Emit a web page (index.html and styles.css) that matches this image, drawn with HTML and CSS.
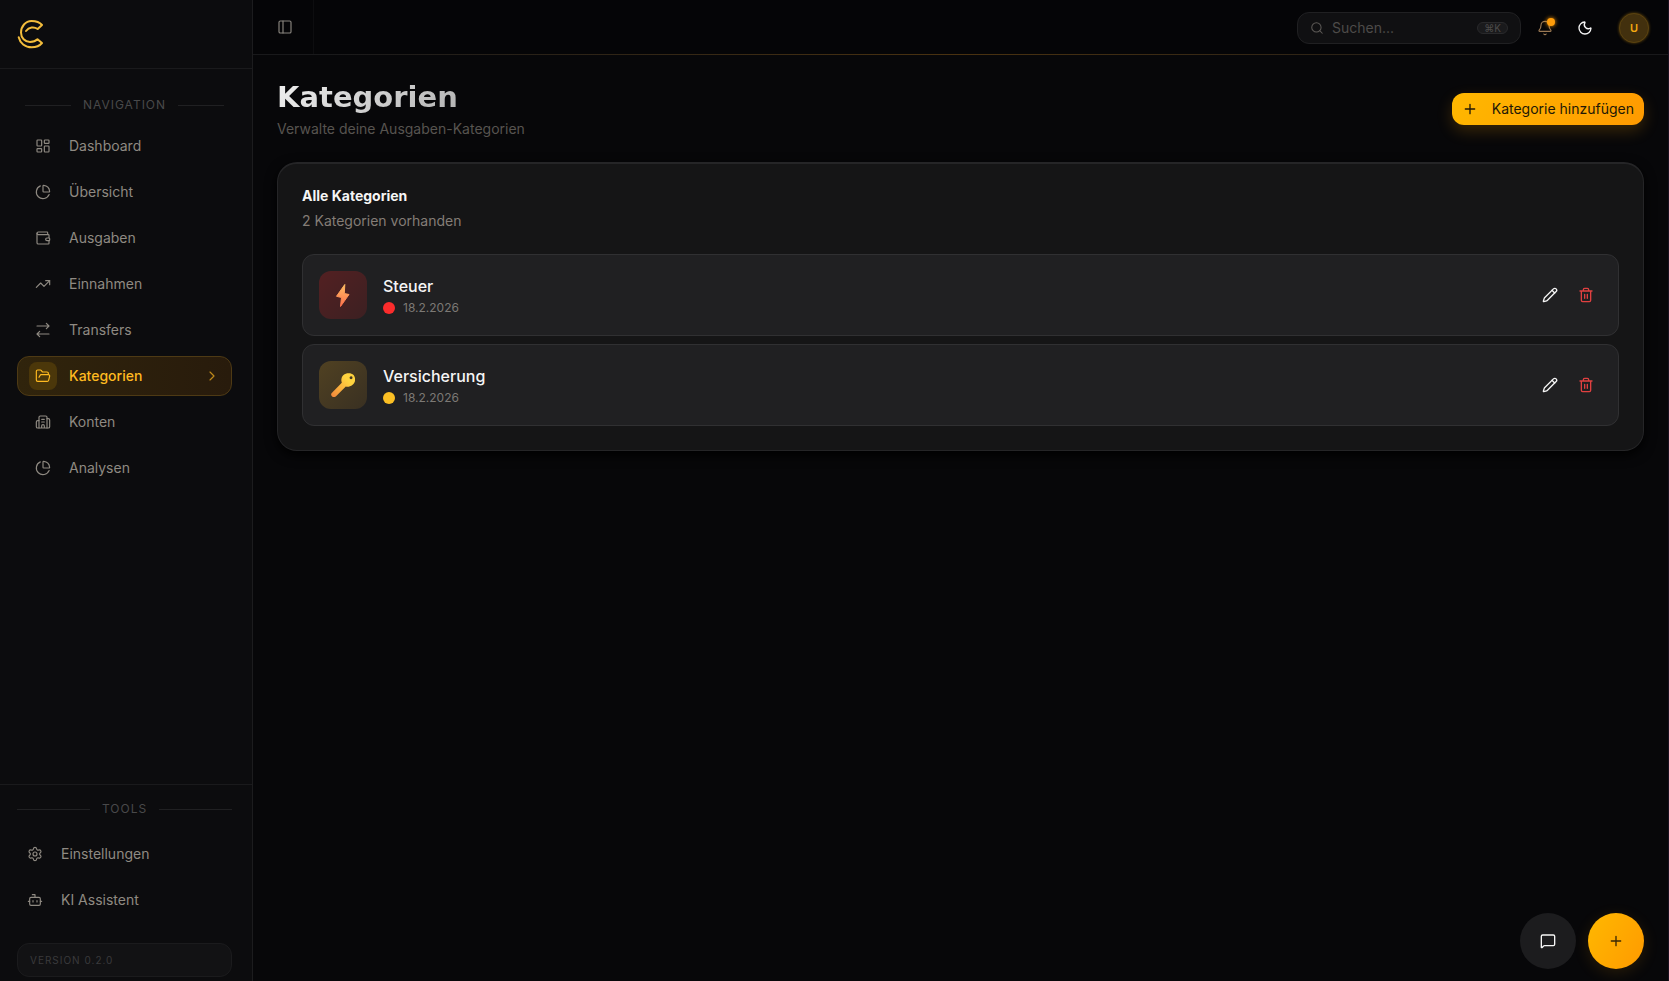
FILE: index.html
```html
<!DOCTYPE html>
<html lang="de">
<head>
<meta charset="utf-8">
<meta name="viewport" content="width=device-width, initial-scale=1">
<title>Kategorien</title>
<link rel="stylesheet" href="styles.css">
</head>
<body>
<svg class="sprite" aria-hidden="true">
  <symbol id="pie" viewBox="0 0 24 24"><path d="M21 12c.552 0 1.005-.449.95-.998a10 10 0 0 0-8.953-8.951c-.55-.055-.998.398-.998.95v8a1 1 0 0 0 1 1z"/><path d="M21.21 15.89A10 10 0 1 1 8 2.83"/></symbol>
  <symbol id="plus" viewBox="0 0 24 24"><path d="M5 12h14M12 5v14"/></symbol>
  <symbol id="pencil" viewBox="0 0 24 24"><path d="M21.174 6.812a1 1 0 0 0-3.986-3.987L3.842 16.174a2 2 0 0 0-.5.83l-1.321 4.352a.5.5 0 0 0 .623.622l4.353-1.32a2 2 0 0 0 .83-.497z"/><path d="m15 5 4 4"/></symbol>
  <symbol id="trash" viewBox="0 0 24 24"><path d="M10 11v6M14 11v6M19 6v14a2 2 0 0 1-2 2H7a2 2 0 0 1-2-2V6M3 6h18M8 6V4a2 2 0 0 1 2-2h4a2 2 0 0 1 2 2v2"/></symbol>
</svg>
<div class="app">
  <aside class="sidebar">
    <a class="brand" href="#" aria-label="Startseite">
      <svg class="logo" viewBox="0 0 28 32"><path d="M9 13C12 9 17 8.500 20.700 11L25 7C22.500 4 18.500 3 14.500 3 8.500 3 4 8.500 4 14.500 4 20 8 24 13 24 16 24 18.500 23.300 20.500 21.300L25 25C22.500 28 19 29.300 14.700 29.300 8 29.300 3 25 1.700 19.300"/></svg>
    </a>
    <nav class="nav" aria-label="Navigation">
      <h2 class="group-label group-label--inset">Navigation</h2>
      <a class="nav-item" href="#"><span class="nav-icon"><svg class="icon" viewBox="0 0 24 24"><rect x="3" y="3" width="7" height="9" rx="1"/><rect x="14" y="3" width="7" height="5" rx="1"/><rect x="14" y="12" width="7" height="9" rx="1"/><rect x="3" y="16" width="7" height="5" rx="1"/></svg></span>Dashboard</a>
      <a class="nav-item" href="#"><span class="nav-icon"><svg class="icon"><use href="#pie"/></svg></span>Übersicht</a>
      <a class="nav-item" href="#"><span class="nav-icon"><svg class="icon" viewBox="0 0 24 24"><path d="M19 7V4a1 1 0 0 0-1-1H5a2 2 0 0 0 0 4h15a1 1 0 0 1 1 1v4h-3a2 2 0 0 0 0 4h3a1 1 0 0 0 1-1v-2a1 1 0 0 0-1-1"/><path d="M3 5v14a2 2 0 0 0 2 2h15a1 1 0 0 0 1-1v-4"/></svg></span>Ausgaben</a>
      <a class="nav-item" href="#"><span class="nav-icon"><svg class="icon" viewBox="0 0 24 24"><path d="M16 7h6v6"/><path d="m22 7-8.500 8.500-5-5L2 17"/></svg></span>Einnahmen</a>
      <a class="nav-item" href="#"><span class="nav-icon"><svg class="icon" viewBox="0 0 24 24"><path d="m17 2 4 4-4 4M3 6h18M7 22l-4-4 4-4M21 18H3"/></svg></span>Transfers</a>
      <a class="nav-item nav-item--active" href="#" aria-current="page"><span class="nav-icon"><svg class="icon" viewBox="0 0 24 24"><path d="m6 14 1.500-2.900A2 2 0 0 1 9.240 10H20a2 2 0 0 1 1.940 2.500l-1.540 6a2 2 0 0 1-1.950 1.500H4a2 2 0 0 1-2-2V5a2 2 0 0 1 2-2h3.900a2 2 0 0 1 1.690.9l.81 1.200a2 2 0 0 0 1.670.9H18a2 2 0 0 1 2 2v2"/></svg></span>Kategorien<svg class="icon chevron" viewBox="0 0 24 24"><path d="m9 18 6-6-6-6"/></svg></a>
      <a class="nav-item" href="#"><span class="nav-icon"><svg class="icon" viewBox="0 0 24 24"><path d="M10 12h4M10 8h4M14 21v-3a2 2 0 0 0-4 0v3M6 10H4a2 2 0 0 0-2 2v7a2 2 0 0 0 2 2h16a2 2 0 0 0 2-2V9a2 2 0 0 0-2-2h-2"/><path d="M6 21V5a2 2 0 0 1 2-2h8a2 2 0 0 1 2 2v16"/></svg></span>Konten</a>
      <a class="nav-item" href="#"><span class="nav-icon"><svg class="icon"><use href="#pie"/></svg></span>Analysen</a>
    </nav>
    <div class="tools">
      <h2 class="group-label">Tools</h2>
      <a class="nav-item nav-item--tool" href="#"><svg class="icon" viewBox="0 0 24 24"><path d="M9.671 4.136a2.340 2.340 0 0 1 4.659 0 2.340 2.340 0 0 0 3.319 1.915 2.340 2.340 0 0 1 2.330 4.033 2.340 2.340 0 0 0 0 3.831 2.340 2.340 0 0 1-2.330 4.033 2.340 2.340 0 0 0-3.319 1.915 2.340 2.340 0 0 1-4.659 0 2.340 2.340 0 0 0-3.320-1.915 2.340 2.340 0 0 1-2.330-4.033 2.340 2.340 0 0 0 0-3.831A2.340 2.340 0 0 1 6.350 6.051a2.340 2.340 0 0 0 3.319-1.915"/><circle cx="12" cy="12" r="3"/></svg>Einstellungen</a>
      <a class="nav-item nav-item--tool" href="#"><svg class="icon" viewBox="0 0 24 24"><path d="M12 8V4H8"/><rect width="16" height="12" x="4" y="8" rx="2"/><path d="M2 14h2M20 14h2M15 13v2M9 13v2"/></svg>KI Assistent</a>
      <p class="version">Version 0.2.0</p>
    </div>
  </aside>
  <div class="page">
    <header class="topbar">
      <div class="topbar-start">
        <button class="icon-button sidebar-toggle" type="button" aria-label="Seitenleiste umschalten"><svg class="icon" viewBox="0 0 24 24"><rect x="3" y="3" width="18" height="18" rx="2"/><path d="M9 3v18"/></svg></button>
      </div>
      <div class="topbar-actions">
        <label class="search"><svg class="icon" viewBox="0 0 24 24"><path d="m21 21-4.340-4.340"/><circle cx="11" cy="11" r="8"/></svg><input type="search" placeholder="Suchen..." aria-label="Suchen"><kbd>⌘K</kbd></label>
        <button class="icon-button bell" type="button" aria-label="Benachrichtigungen"><svg class="icon" viewBox="0 0 24 24"><path d="M10.268 21a2 2 0 0 0 3.464 0"/><path d="M3.262 15.326A1 1 0 0 0 4 17h16a1 1 0 0 0 .740-1.673C19.410 13.956 18 12.499 18 8A6 6 0 0 0 6 8c0 4.499-1.411 5.956-2.738 7.326"/></svg><span class="badge"></span></button>
        <button class="icon-button moon" type="button" aria-label="Design wechseln"><svg class="icon" viewBox="0 0 24 24"><path d="M20.985 12.486a9 9 0 1 1-9.473-9.472c.405-.022.617.46.402.803a6 6 0 0 0 8.268 8.268c.344-.215.825-.004.803.401"/></svg></button>
        <button class="avatar" type="button" aria-label="Benutzerkonto">U</button>
      </div>
    </header>
    <main class="content">
      <div class="page-head">
        <div>
          <h1>Kategorien</h1>
          <p class="subtitle">Verwalte deine Ausgaben-Kategorien</p>
        </div>
        <button class="primary" type="button"><svg class="icon"><use href="#plus"/></svg>Kategorie hinzufügen</button>
      </div>
      <section class="card">
        <h2 class="card-title">Alle Kategorien</h2>
        <p class="card-note">2 Kategorien vorhanden</p>
        <ul class="rows">
          <li class="row">
            <span class="tile tile--red"><svg viewBox="0 0 24 24"><defs><linearGradient id="bolt" x1="0" y1="0" x2="0" y2="1"><stop offset="0" stop-color="#ffbd63"/><stop offset="1" stop-color="#ff704c"/></linearGradient></defs><path fill="url(#bolt)" stroke="url(#bolt)" stroke-linejoin="round" d="M13.800 1.500 5.500 13.300 10.500 14.500 9.500 23.500 18 11.500 13.300 10.500z"/></svg></span>
            <div class="row-text"><h3>Steuer</h3><p class="row-date"><span class="dot dot--red"></span>18.2.2026</p></div>
            <div class="row-actions">
              <button class="icon-button" type="button" aria-label="Steuer bearbeiten"><svg class="icon"><use href="#pencil"/></svg></button>
              <button class="icon-button danger" type="button" aria-label="Steuer löschen"><svg class="icon"><use href="#trash"/></svg></button>
            </div>
          </li>
          <li class="row">
            <span class="tile tile--yellow"><svg viewBox="0 0 24 24"><defs><linearGradient id="key" x1="1" y1="0" x2="0" y2="1"><stop offset="0.300" stop-color="#ffd33f"/><stop offset="1" stop-color="#f2853c"/></linearGradient></defs><path fill="url(#key)" fill-rule="evenodd" d="M12.500 2C15-.3 20.300-.3 22.600 2 25 5 24.600 9.500 21.600 11.800 19.300 13.600 16.800 14.200 14.800 13.600L5 23.200C3.700 24.500 1.500 24.500.5 22.800-.3 21.500.2 20.500 1 19.700L10.800 9.800C9.800 6.800 10.400 4 12.500 2M20 3.200a1.500 1.500 0 1 0 .1 3 1.500 1.500 0 0 0-.1-3"/></svg></span>
            <div class="row-text"><h3>Versicherung</h3><p class="row-date"><span class="dot dot--yellow"></span>18.2.2026</p></div>
            <div class="row-actions">
              <button class="icon-button" type="button" aria-label="Versicherung bearbeiten"><svg class="icon"><use href="#pencil"/></svg></button>
              <button class="icon-button danger" type="button" aria-label="Versicherung löschen"><svg class="icon"><use href="#trash"/></svg></button>
            </div>
          </li>
        </ul>
      </section>
    </main>
  </div>
</div>
<div class="floating">
  <button class="fab" type="button" aria-label="Chat öffnen"><svg class="icon" viewBox="0 0 24 24"><path d="M22 17a2 2 0 0 1-2 2H6.828a2 2 0 0 0-1.414.586l-2.202 2.202A.710.710 0 0 1 2 21.286V5a2 2 0 0 1 2-2h16a2 2 0 0 1 2 2z"/></svg></button>
  <button class="fab fab--primary" type="button" aria-label="Hinzufügen"><svg class="icon"><use href="#plus"/></svg></button>
</div>
</body>
</html>
```
FILE: styles.css
```css
* { box-sizing: border-box; margin: 0; }
body {
  background: #070709;
  color: #f5f5f5;
  font: 400 14px/20px Inter, "Liberation Sans", sans-serif;
}
a { color: inherit; text-decoration: none; }
button, input { font: inherit; color: inherit; border: 0; background: none; padding: 0; }
.sprite { position: absolute; width: 0; height: 0; }
.icon {
  width: 16px;
  height: 16px;
  flex: none;
  fill: none;
  stroke: currentColor;
  stroke-width: 2;
  stroke-linecap: round;
  stroke-linejoin: round;
}
.app { display: flex; min-height: 100vh; border-right: 1px solid #1b1020; }

.sidebar {
  width: 253px;
  flex: none;
  display: flex;
  flex-direction: column;
  background: #0c0c0e;
  border-right: 1px solid #1c1c1e;
  color: #8f8a82;
}
.brand { height: 69px; padding: 18px 17px; border-bottom: 1px solid #1a1a1c; }
.logo { width: 28px; height: 32px; fill: none; stroke: #f3bd3c; stroke-width: 2; stroke-linejoin: round; stroke-linecap: round; }
.nav { flex: 1; display: flex; flex-direction: column; gap: 6px; padding: 28px 20px 0 17px; }
.nav .icon, .tools .icon { stroke-width: 1.75; }
.group-label {
  display: flex;
  align-items: center;
  gap: 12px;
  color: #49494a;
  font-size: 12px;
  font-weight: 400;
  line-height: 16px;
  letter-spacing: 1px;
  text-transform: uppercase;
}
.group-label::before, .group-label::after { content: ""; flex: 1; height: 1px; background: #202022; }
.group-label--inset { margin: 0 8px 7px; }
.nav-item {
  display: flex;
  align-items: center;
  gap: 12px;
  height: 40px;
  padding: 0 11px;
  border: 1px solid transparent;
  border-radius: 12px;
}
.nav-icon { display: grid; place-items: center; width: 28px; height: 28px; border-radius: 8px; }
.nav-item--active {
  color: #ffba20;
  font-weight: 500;
  border-color: #4e3a14;
  background: linear-gradient(90deg, #30240c, #281b0c);
}
.nav-item--active .nav-icon { background: #4b370a; }
.chevron { margin-left: auto; color: #bd881a; }
.tools { border-top: 1px solid #1a1a1c; padding: 16px 20px 4px 17px; display: flex; flex-direction: column; gap: 6px; }
.tools .group-label { margin-bottom: 11px; }
.nav-item--tool { gap: 18px; padding: 0 9px; }
.version {
  margin-top: 17px;
  padding: 8px 12px;
  border: 1px solid #1b1b1d;
  border-radius: 12px;
  background: #121214;
  color: #3a3a3c;
  font-size: 10px;
  line-height: 16px;
  letter-spacing: 1px;
  text-transform: uppercase;
}

.page { flex: 1; min-width: 0; }
.topbar {
  height: 55px;
  display: flex;
  align-items: center;
  justify-content: space-between;
  padding: 0 18px 0 16px;
  background: #050507;
  border-bottom: 1px solid;
  border-image: linear-gradient(90deg, #19191b 5%, #4a3210 50%, #19191b 95%) 1;
}
.icon-button { display: grid; place-items: center; width: 32px; height: 32px; border-radius: 8px; }
.topbar-start { display: flex; align-items: center; height: 100%; padding-right: 12px; border-right: 1px solid #0d0d0f; }
.sidebar-toggle { color: #88847e; }
.topbar-actions { display: flex; align-items: center; gap: 8px; padding-top: 2px; }
.topbar .icon { stroke-width: 1.75; }
.search {
  display: flex;
  align-items: center;
  gap: 8px;
  width: 224px;
  height: 32px;
  padding: 0 12px;
  border: 1px solid #202022;
  border-radius: 12px;
  background: #101012;
  color: #5d5a57;
}
.search .icon { width: 14px; height: 14px; }
.search input { flex: 1; min-width: 0; outline: 0; }
.search input::placeholder { color: #4d4b49; opacity: 1; }
.search kbd {
  padding: 0 6px;
  border: 1px solid #29292b;
  border-radius: 8px;
  background: #1a1a1c;
  color: #4c4b4a;
  font: 10px/10px Inter, "DejaVu Sans", sans-serif;
}
.bell { position: relative; color: #9b7953; }
.moon .icon { stroke-width: 2; }
.badge {
  position: absolute;
  top: 6px;
  right: 6px;
  width: 8px;
  height: 8px;
  border-radius: 50%;
  background: #ff9d0a;
  box-shadow: 0 0 4px #ff9d0a;
}
.avatar {
  width: 30px;
  height: 30px;
  margin: 0 1px 0 10px;
  border: 1px solid #5a4210;
  border-radius: 50%;
  background: #42300e;
  box-shadow: 0 0 3px #6b4c0c;
  color: #f5a911;
  font-size: 11px;
  font-weight: 600;
}
.content { padding: 24px 24px 24px 24px; }
.page-head { display: flex; align-items: center; justify-content: space-between; gap: 24px; margin-bottom: 23px; }
h1 {
  font: 700 29px/36px "DejaVu Sans", sans-serif;
  color: transparent;
  background: linear-gradient(135deg, #f0f0f0, #a0a0a0);
  background-clip: text;
}
.subtitle { margin-top: 4px; color: #575450; }
.primary {
  display: flex;
  align-items: center;
  gap: 14px;
  height: 32px;
  padding: 0 10px;
  border-radius: 12px;
  background: linear-gradient(120deg, #ffb800, #ff9a00);
  color: #221806;
  box-shadow: 0 6px 16px #ffa50033;
}
.card {
  padding: 22px 24px 24px;
  border: 1px solid #252527;
  border-top-width: 2px;
  border-radius: 20px;
  background: #151516;
  box-shadow: 0 4px 12px #000;
}
.card-title { font-size: 14px; font-weight: 700; line-height: 20px; }
.card-note { margin-top: 5px; color: #847d76; }
.rows { display: grid; gap: 8px; margin-top: 23px; padding: 0; list-style: none; }
.row {
  display: flex;
  align-items: center;
  gap: 16px;
  padding: 16px;
  border: 1px solid #303032;
  border-radius: 12px;
  background: #202022;
}
.tile { display: grid; place-items: center; width: 48px; height: 48px; border-radius: 12px; }
.tile svg { width: 24px; height: 24px; }
.tile--red { background: linear-gradient(135deg, #532022, #3c2022); }
.tile--yellow { background: linear-gradient(135deg, #504122, #393022); }
.row-text { flex: 1; }
.row h3 { font-size: 16px; font-weight: 500; line-height: 24px; }
.row-date { display: flex; align-items: center; gap: 8px; margin-top: 2px; color: #7c7975; font-size: 12px; line-height: 16px; }
.dot { width: 12px; height: 12px; border-radius: 50%; }
.dot--red { background: #fb2c2c; }
.dot--yellow { background: #fbbf24; }
.row-actions { display: flex; gap: 4px; }
.danger { color: #e04040; }
.floating { position: fixed; right: 25px; bottom: 12px; display: flex; gap: 12px; }
.fab { display: grid; place-items: center; width: 56px; height: 56px; border-radius: 50%; background: #1c1c1e; }
.fab--primary { background: linear-gradient(120deg, #ffb800, #ff9a00); color: #3a2805; box-shadow: 0 4px 16px #ffa50022; }
```
